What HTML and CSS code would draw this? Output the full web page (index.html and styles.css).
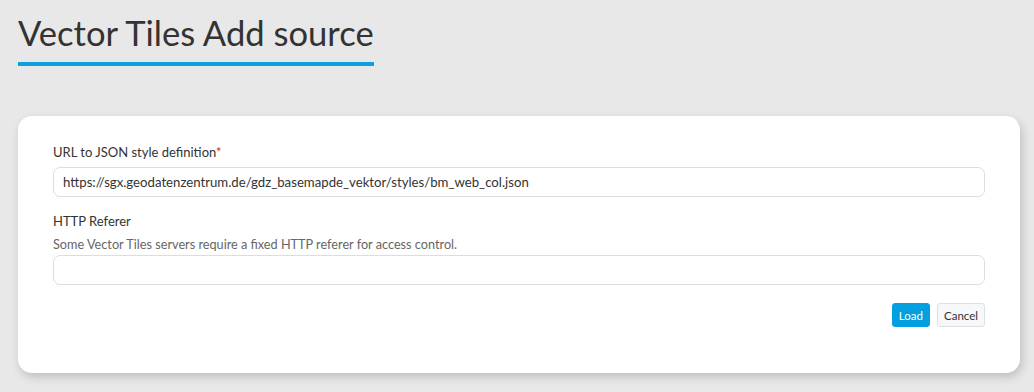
FILE: index.html
```html
<!DOCTYPE html>
<html lang="en">
<head>
    <meta charset="UTF-8">
    <title>Vector Tiles Add source</title>
    <link rel="stylesheet" href="styles.css">
</head>
<body>
    <div class="page">
        <h1 class="page-title">Vector Tiles Add source</h1>

        <div class="card">
            <div class="field">
                <label for="style-url">URL to JSON style definition<span class="required">*</span></label>
                <input type="text" id="style-url" value="https://sgx.geodatenzentrum.de/gdz_basemapde_vektor/styles/bm_web_col.json">
            </div>

            <div class="field">
                <label for="referer">HTTP Referer</label>
                <p class="help">Some Vector Tiles servers require a fixed HTTP referer for access control.</p>
                <input type="text" id="referer">
            </div>

            <div class="actions">
                <button class="btn btn-primary">Load</button>
                <button class="btn btn-default">Cancel</button>
            </div>
        </div>
    </div>
</body>
</html>
```

FILE: styles.css
```css
* {
    margin: 0;
    padding: 0;
    box-sizing: border-box;
    font-family: Lato, 'Open Sans', sans-serif;
}

body {
    background: #e8e8e8;
    color: #333;
    height: 100vh;
    overflow: hidden;
}

.page {
    padding: 10px 14px 0 18px;
}

.page-title {
    display: inline-block;
    font-size: 34.6px;
    font-weight: 400;
    color: #333;
    line-height: 46px;
    padding-bottom: 6px;
    border-bottom: 4px solid #0d9fdf;
}

.card {
    margin-top: 50px;
    background: #fff;
    border-radius: 14px;
    box-shadow: 2px 4px 10px rgba(0, 0, 0, 0.18);
    padding: 28px 35px 46px 35px;
}

.field {
    margin-bottom: 16px;
}

.field label {
    display: block;
    font-size: 13px;
    color: #333;
    margin-bottom: 7px;
}

.required {
    color: #c0392b;
}

.help {
    font-size: 12.7px;
    color: #666;
    margin-top: 2px;
    margin-bottom: 3px;
}

.field input {
    display: block;
    width: 100%;
    height: 30px;
    padding: 0 9px;
    border: 1px solid #ddd;
    border-radius: 7px;
    font-size: 13.2px;
    color: #333;
    outline: none;
}

.actions {
    display: flex;
    justify-content: flex-end;
    gap: 7px;
    margin-top: 18px;
}

.btn {
    height: 24px;
    padding: 0 6px;
    font-size: 11.5px;
    border-radius: 3px;
    cursor: pointer;
}

.btn-primary {
    background: #049fdf;
    color: #fff;
    border: 1px solid #049fdf;
}

.btn-default {
    background: #f7f8fa;
    color: #333;
    border: 1px solid #dde0e4;
}
```
